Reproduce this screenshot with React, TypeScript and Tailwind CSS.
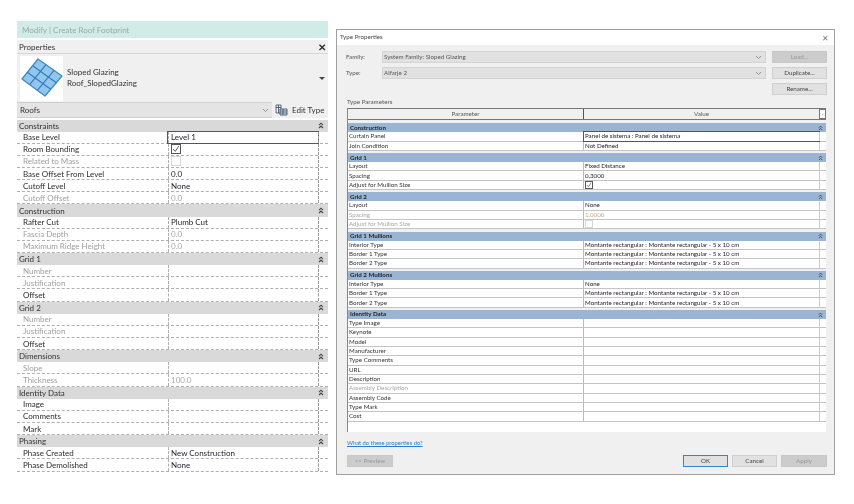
import React from 'react';

type Row = { label: string; value?: string; dim?: boolean; dimValue?: boolean; check?: 'on' | 'off'; focus?: boolean };
type Section = { title: string; rows: Row[] };

const leftSections: Section[] = [
  {
    title: 'Constraints',
    rows: [
      { label: 'Base Level', value: 'Level 1', focus: true },
      { label: 'Room Bounding', check: 'on' },
      { label: 'Related to Mass', dim: true, check: 'off' },
      { label: 'Base Offset From Level', value: '0.0' },
      { label: 'Cutoff Level', value: 'None' },
      { label: 'Cutoff Offset', value: '0.0', dim: true, dimValue: true },
    ],
  },
  {
    title: 'Construction',
    rows: [
      { label: 'Rafter Cut', value: 'Plumb Cut' },
      { label: 'Fascia Depth', value: '0.0', dim: true, dimValue: true },
      { label: 'Maximum Ridge Height', value: '0.0', dim: true, dimValue: true },
    ],
  },
  {
    title: 'Grid 1',
    rows: [{ label: 'Number', dim: true }, { label: 'Justification', dim: true }, { label: 'Offset' }],
  },
  {
    title: 'Grid 2',
    rows: [{ label: 'Number', dim: true }, { label: 'Justification', dim: true }, { label: 'Offset' }],
  },
  {
    title: 'Dimensions',
    rows: [{ label: 'Slope', dim: true }, { label: 'Thickness', value: '100.0', dim: true, dimValue: true }],
  },
  {
    title: 'Identity Data',
    rows: [{ label: 'Image' }, { label: 'Comments' }, { label: 'Mark' }],
  },
  {
    title: 'Phasing',
    rows: [
      { label: 'Phase Created', value: 'New Construction' },
      { label: 'Phase Demolished', value: 'None' },
    ],
  },
];

const MULLION = 'Montante rectangular : Montante rectangular - 5 x 10 cm';

const typeSections: Section[] = [
  {
    title: 'Construction',
    rows: [
      { label: 'Curtain Panel', value: 'Panel de sistema : Panel de sistema', focus: true },
      { label: 'Join Condition', value: 'Not Defined' },
    ],
  },
  {
    title: 'Grid 1',
    rows: [
      { label: 'Layout', value: 'Fixed Distance' },
      { label: 'Spacing', value: '0,3000' },
      { label: 'Adjust for Mullion Size', check: 'on' },
    ],
  },
  {
    title: 'Grid 2',
    rows: [
      { label: 'Layout', value: 'None' },
      { label: 'Spacing', value: '1,0000', dim: true, dimValue: true },
      { label: 'Adjust for Mullion Size', dim: true, check: 'off' },
    ],
  },
  {
    title: 'Grid 1 Mullions',
    rows: [
      { label: 'Interior Type', value: MULLION },
      { label: 'Border 1 Type', value: MULLION },
      { label: 'Border 2 Type', value: MULLION },
    ],
  },
  {
    title: 'Grid 2 Mullions',
    rows: [
      { label: 'Interior Type', value: 'None' },
      { label: 'Border 1 Type', value: MULLION },
      { label: 'Border 2 Type', value: MULLION },
    ],
  },
  {
    title: 'Identity Data',
    rows: [
      { label: 'Type Image' },
      { label: 'Keynote' },
      { label: 'Model' },
      { label: 'Manufacturer' },
      { label: 'Type Comments' },
      { label: 'URL' },
      { label: 'Description' },
      { label: 'Assembly Description', dim: true },
      { label: 'Assembly Code' },
      { label: 'Type Mark' },
      { label: 'Cost' },
    ],
  },
];

const Collapse = ({ size = 6 }: { size?: number }) => (
  <svg width={size} height={size + 1} viewBox="0 0 6 7" fill="none" stroke="#444" strokeWidth="1.1">
    <path d="M1 3.2 3 1.2 5 3.2M1 6 3 4 5 6" />
  </svg>
);

const CheckBox = ({ on, faded, size }: { on: boolean; faded?: boolean; size: string }) => (
  <span className={`flex items-center justify-center border bg-white ${size} ${faded ? 'border-[#d8d8d8]' : 'border-[#555]'}`}>
    {on && (
      <svg viewBox="0 0 10 10" className="w-full h-full" fill="none" stroke={faded ? '#ccc' : '#444'} strokeWidth="1.1">
        <path d="M1.5 5 4 8 8.5 1.5" />
      </svg>
    )}
  </span>
);

const RoofIcon = () => (
  <svg width="43" height="44" viewBox="0 0 43 44">
    <polygon points="18,3 42,20 25,40 2,23" fill="#93c6ec" stroke="#3f8cc6" strokeWidth="1.3" strokeLinejoin="round" />
    <path
      d="M26 8.7 9.7 28.7M34 14.3 17.3 34.3M12.7 9.7 36.3 26.7M7.3 16.3 30.7 33.3"
      stroke="#2f7fbc"
      strokeWidth="1.2"
      fill="none"
    />
  </svg>
);

const EditTypeIcon = () => (
  <svg width="13" height="12" viewBox="0 0 13 12" fill="none" stroke="#4a5a6a" strokeWidth="0.9">
    <path d="M1 1h5v2.5H1zM1 3.5h5V9H1zM3.5 1v8" />
    <path d="M5 5h7v6H5zM5 7h7M5 9h7M8 5v6" fill="#cfe0f0" />
  </svg>
);

const Chevron = () => (
  <svg width="7" height="5" viewBox="0 0 7 5" fill="none" stroke="#888" strokeWidth="0.9">
    <path d="M1 1l2.5 2.5L6 1" />
  </svg>
);

const PropertiesPanel = () => (
  <div className="w-[311px] flex flex-col text-[8px] leading-none text-[#333]">
    <div className="h-[17px] bg-[#d0ebe8] flex items-center pl-[5px] text-[#9aa8a8]">Modify | Create Roof Footprint</div>
    <div className="mt-[2px] bg-[#f0f0f0] flex flex-col">
      <div className="h-[14px] flex items-center justify-between pl-[2px] pr-[2px] border-b border-[#d6d6d6]">
        <span>Properties</span>
        <span className="font-bold text-[10px] text-[#333]">✕</span>
      </div>
      <div className="h-[48px] flex items-center pl-[3px] pr-[3px]">
        <div className="w-[43px] h-[45px] bg-white flex items-center justify-center">
          <RoofIcon />
        </div>
        <div className="ml-[4px] flex-1 flex flex-col gap-[2px] leading-[9px]">
          <span>Sloped Glazing</span>
          <span>Roof_SlopedGlazing</span>
        </div>
        <span className="w-0 h-0 border-x-[3px] border-x-transparent border-t-[3px] border-t-[#444]" />
      </div>
      <div className="h-[16px] flex bg-[#e4e4e4]">
        <div className="w-[255px] border-y border-[#d0d0d0] flex items-center justify-between pl-[3px] pr-[3px]">
          <span>Roofs</span>
          <Chevron />
        </div>
        <div className="flex-1 bg-[#f0f0f0] flex items-center gap-[4px] pl-[3px] whitespace-nowrap">
          <EditTypeIcon />
          <span>Edit Type</span>
        </div>
      </div>
    </div>
    <div className="mt-[1.5px] flex flex-col">
      {leftSections.map((s) => (
        <div key={s.title}>
          <div className="h-[12.15px] bg-[#d9d9d9] flex items-center justify-between pl-[2px] pr-[4px]">
            <span>{s.title}</span>
            <Collapse />
          </div>
          {s.rows.map((r) => (
            <div key={r.label} className="h-[12.15px] flex border-b border-dashed border-[#b0b0b0] bg-white">
              <div className={`w-[151px] pl-[6px] flex items-center ${r.dim ? 'text-[#a0a0a0]' : 'text-[#2c2c2c]'}`}>{r.label}</div>
              <div
                className={`w-[150px] pl-[2px] flex items-center border-l border-dashed border-[#b0b0b0] ${
                  r.focus ? 'outline outline-[#555]' : ''
                } ${r.dimValue ? 'text-[#a8a8a8]' : 'text-[#2a2030]'}`}
              >
                {r.check ? <CheckBox on={r.check === 'on'} faded={r.dim} size="w-[10px] h-[10px]" /> : r.value}
              </div>
              <div className="flex-1 border-l border-dashed border-[#999]" />
            </div>
          ))}
        </div>
      ))}
    </div>
  </div>
);

const DialogButton = ({ label, tone = 'normal', w = 'w-[55px]' }: { label: string; tone?: 'normal' | 'off' | 'default'; w?: string }) => {
  const tones = {
    normal: 'bg-[#e1e1e1] border-[#cfcfcf] text-[#444]',
    off: 'bg-[#cccccc] border-[#c8c8c8] text-[#999]',
    default: 'bg-[#e1e1e1] border-[#2f86d6] text-[#444]',
  };
  return <div className={`${w} h-[12px] border flex items-center justify-center ${tones[tone]}`}>{label}</div>;
};

const TypeSelect = ({ value }: { value: string }) => (
  <div className="w-[384px] h-[11.5px] bg-[#e1e1e1] border border-[#d4d4d4] flex items-center justify-between pl-[1px] pr-[3px] text-[#555]">
    <span>{value}</span>
    <Chevron />
  </div>
);

const TypeDialog = () => (
  <div className="mt-[8px] ml-[8px] w-[499px] h-[446px] bg-[#f0f0f0] border border-[#a0a0a0] flex flex-col text-[6.2px] leading-none text-[#333]">
    <div className="h-[15px] bg-white flex items-center justify-between pl-[3px] pr-[5px] text-[#444]">
      <span>Type Properties</span>
      <span className="text-[8px] text-[#777]">✕</span>
    </div>
    <div className="flex pl-[9px] pr-[6px] pt-[6px] gap-[6px]">
      <div className="flex flex-col gap-[4px] w-[420px]">
        <div className="flex items-center h-[12px]">
          <span className="w-[36px] text-[#555]">Family:</span>
          <TypeSelect value="System Family: Sloped Glazing" />
        </div>
        <div className="flex items-center h-[12px]">
          <span className="w-[36px] text-[#555]">Type:</span>
          <TypeSelect value="Alfarje 2" />
        </div>
      </div>
      <div className="flex flex-col gap-[4px]">
        <DialogButton label="Load..." tone="off" />
        <DialogButton label="Duplicate..." />
        <DialogButton label="Rename..." />
      </div>
    </div>
    <div className="ml-[10px] mt-[4px] text-[#555]">Type Parameters</div>
    <div className="ml-[10px] mt-[3px] w-[479px] h-[324px] bg-white border-l border-[#888] flex flex-col">
      <div className="h-[12px] flex bg-[#f0f0f0] border-y border-[#777] text-[#555]">
        <div className="w-[236px] flex items-center justify-center border-r border-[#555]">Parameter</div>
        <div className="w-[235px] flex items-center justify-center">Value</div>
        <div className="flex-1 border border-[#777] bg-white flex items-center justify-center text-[6px]">-</div>
      </div>
      <div className="bg-[#f0f0f0] h-[3px]" />
      {typeSections.map((s, i) => (
        <div key={s.title} className={i > 0 ? 'pt-[2.25px] bg-[#f0f0f0]' : ''}>
          <div className="h-[9px] bg-[#9ab5d3] flex items-center justify-between pl-[2px] pr-[3px] font-bold text-[#222]">
            <span>{s.title}</span>
            <Collapse size={5} />
          </div>
          {s.rows.map((r) => (
            <div key={r.label} className="h-[9.34px] flex bg-white border-b border-[#c4c4c4]">
              <div className={`w-[236px] pl-[1px] flex items-center border-r border-[#bbb] ${r.dim ? 'text-[#a8a8a8]' : 'text-[#333]'}`}>{r.label}</div>
              <div
                className={`w-[235px] pl-[1px] flex items-center ${r.focus ? 'outline outline-[#555]' : ''} ${
                  r.dimValue ? 'text-[#c4a888]' : 'text-[#2a2030]'
                }`}
              >
                {r.check ? <CheckBox on={r.check === 'on'} faded={r.dim} size="w-[8px] h-[8px]" /> : r.value}
              </div>
              <div className="flex-1 border-l border-[#ccc]" />
            </div>
          ))}
        </div>
      ))}
    </div>
    <div className="ml-[10px] mt-[8px] text-[5.8px] text-[#2a7ad0] underline">What do these properties do?</div>
    <div className="mt-[9px] pl-[10px] pr-[7px] flex items-center">
      <DialogButton label="<< Preview" tone="off" w="w-[46px]" />
      <div className="flex-1" />
      <div className="flex gap-[4px]">
        <DialogButton label="OK" tone="default" w="w-[45px]" />
        <DialogButton label="Cancel" w="w-[45px]" />
        <DialogButton label="Apply" tone="off" w="w-[46px]" />
      </div>
    </div>
  </div>
);

export default function App() {
  return (
    <div className="w-[854px] h-[504px] overflow-hidden bg-white flex items-start pt-[21px] pl-[17px] blur-[0.45px] font-['Lato','Open_Sans',sans-serif]">
      <PropertiesPanel />
      <TypeDialog />
    </div>
  );
}
